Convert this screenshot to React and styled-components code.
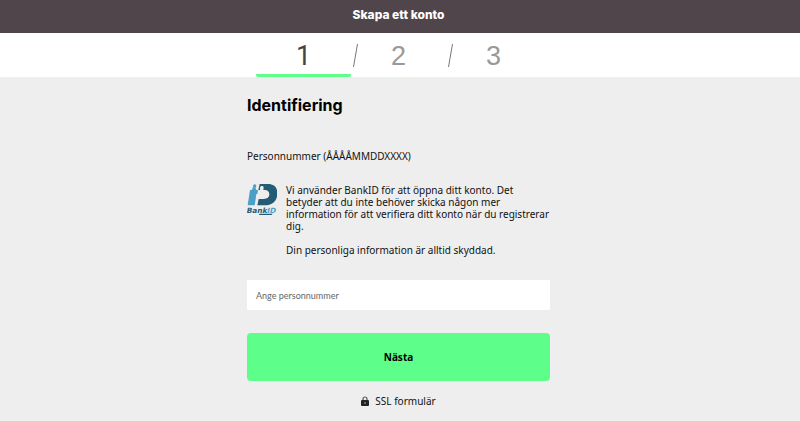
import React from "react";
import styled, { createGlobalStyle } from "styled-components";

const steps = [1, 2, 3];

const BankIdLogo = () => (
  <Logo viewBox="0 0 90 93" role="img" aria-label="BankID">
    <path
      fill="#4aa0c6"
      d="M9 18h5c3-2 2-5 3-8h9c0 4 0 7 3 8h4l-2 12c-4 0-5 4-4 8l-4 26H2z"
    />
    <circle cx="23" cy="6" r="5" fill="#4aa0c6" />
    <path
      fill="#245c75"
      d="M38 0h25c18 0 28 10 28 28 0 22-14 36-38 36H31l4-19h15c11 0 17-5 17-14 0-7-4-12-11-13h-6c-3-2 0-4 0-7 0-3-2-5-5-5s-6 2-6 5c0 3 2 5-1 7h-4z"
    />
    <LogoText x="-1" y="86" fill="#245c75">
      Bank<tspan fill="#4aa0c6">ID</tspan>
    </LogoText>
    <path fill="#245c75" d="M37 89h40l-3 4H36z" />
  </Logo>
);

const LockIcon = () => (
  <Lock viewBox="0 0 8 10" aria-hidden="true">
    <path d="M2 5V3a2 2 0 0 1 4 0v2" fill="none" stroke="#555" strokeWidth="1.2" />
    <rect y="4" width="8" height="6" rx="1" fill="#222" />
    <rect x="3.5" y="6" width="1" height="2" fill="#aaa" />
  </Lock>
);

const App = () => {
  return (
    <Page>
      <GlobalStyle />
      <Header>Skapa ett konto</Header>
      <StepBar>
        <Steps>
          {steps.map((step) => (
            <Step key={step} $active={step === 1} aria-current={step === 1 ? "step" : undefined}>
              {step > 1 && (
                <Slash viewBox="0 0 5 23" aria-hidden="true">
                  <path d="M4.5 0L.5 23" stroke="#777" strokeWidth="1" />
                </Slash>
              )}
              <StepNumber $active={step === 1}>{step}</StepNumber>
            </Step>
          ))}
        </Steps>
      </StepBar>
      <Content>
        <Form onSubmit={(e) => e.preventDefault()}>
          <Title>Identifiering</Title>
          <Label htmlFor="personnummer">Personnummer (ÅÅÅÅMMDDXXXX)</Label>
          <Info>
            <BankIdLogo />
            <InfoText>
              <p>
                Vi använder BankID för att öppna ditt konto. Det betyder att du inte behöver
                skicka någon mer information för att verifiera ditt konto när du registrerar dig.
              </p>
              <p>Din personliga information är alltid skyddad.</p>
            </InfoText>
          </Info>
          <Input id="personnummer" type="text" placeholder="Ange personnummer" />
          <Button type="submit">Nästa</Button>
          <Secure>
            <LockIcon />
            SSL formulär
          </Secure>
        </Form>
      </Content>
    </Page>
  );
};

export default App;

const GlobalStyle = createGlobalStyle`
  * {
    box-sizing: border-box;
  }

  body {
    margin: 0;
    background: #eee;
    color: #111;
    font-family: "Noto Sans", "Open Sans", sans-serif;
    font-size: 10px;
    line-height: 12px;
  }

  p, h1 {
    margin: 0;
  }
`;

const Page = styled.div`
  display: flex;
  flex-direction: column;
  min-height: 100vh;
`;

const Header = styled.header`
  padding: 7px 19px 10px 16px;
  background: #4f454a;
  color: white;
  font-family: Inter, sans-serif;
  font-size: 12px;
  font-weight: 800;
  line-height: 16px;
  text-align: center;
`;

const StepBar = styled.nav`
  padding: 0 19px 0 16px;
  background: white;
`;

const Steps = styled.ol`
  display: grid;
  grid-template-columns: repeat(3, 1fr);
  max-width: 285px;
  margin: 0 auto;
  padding: 0;
  list-style: none;
`;

const Step = styled.li`
  display: grid;
  grid-template-columns: 9px 1fr 9px;
  align-items: center;
  height: 44px;
  padding-top: 4px;
  border-bottom: 3px solid ${(props) => (props.$active ? "#5dff8a" : "transparent")};
  border-radius: 2px;
  color: ${(props) => (props.$active ? "#444" : "#999")};
`;

const StepNumber = styled.span`
  grid-column: 2;
  font-family: ${(props) => (props.$active ? "Roboto" : '"Liberation Sans"')}, sans-serif;
  font-size: 27px;
  line-height: 30px;
  text-align: center;
`;

const Slash = styled.svg`
  width: 5px;
  height: 23px;
  justify-self: center;
`;

const Content = styled.main`
  flex: 1;
  padding: 17px 19px 14px 16px;
`;

const Form = styled.form`
  display: flex;
  flex-direction: column;
  max-width: 303px;
  margin: 0 auto;
`;

const Title = styled.h1`
  color: #000;
  font-family: Inter, sans-serif;
  font-size: 16px;
  font-weight: bold;
  line-height: 22px;
`;

const Label = styled.label`
  margin-top: 34px;
`;

const Info = styled.div`
  display: flex;
  gap: 9px;
  margin-top: 22px;
`;

const InfoText = styled.div`
  display: flex;
  flex: 1;
  flex-direction: column;
  gap: 12px;
`;

const Logo = styled.svg`
  flex: none;
  width: 30px;
  height: 31px;
`;

const LogoText = styled.text`
  font-family: "DejaVu Sans", sans-serif;
  font-size: 22px;
  font-style: italic;
  font-weight: bold;
`;

const Input = styled.input`
  width: 100%;
  height: 30px;
  margin-top: 24px;
  padding: 0 9px;
  border: none;
  background: white;
  color: #111;
  font-family: Lato, sans-serif;
  font-size: 9px;

  &::placeholder {
    color: #666;
  }
`;

const Button = styled.button`
  height: 48px;
  margin-top: 23px;
  border: none;
  border-radius: 4px;
  background: #5dff8a;
  color: #000;
  font-family: inherit;
  font-size: 10px;
  font-weight: bold;
  cursor: pointer;
`;

const Secure = styled.div`
  display: flex;
  align-items: center;
  justify-content: center;
  gap: 6px;
  margin-top: 14px;
`;

const Lock = styled.svg`
  width: 8px;
  height: 10px;
`;
